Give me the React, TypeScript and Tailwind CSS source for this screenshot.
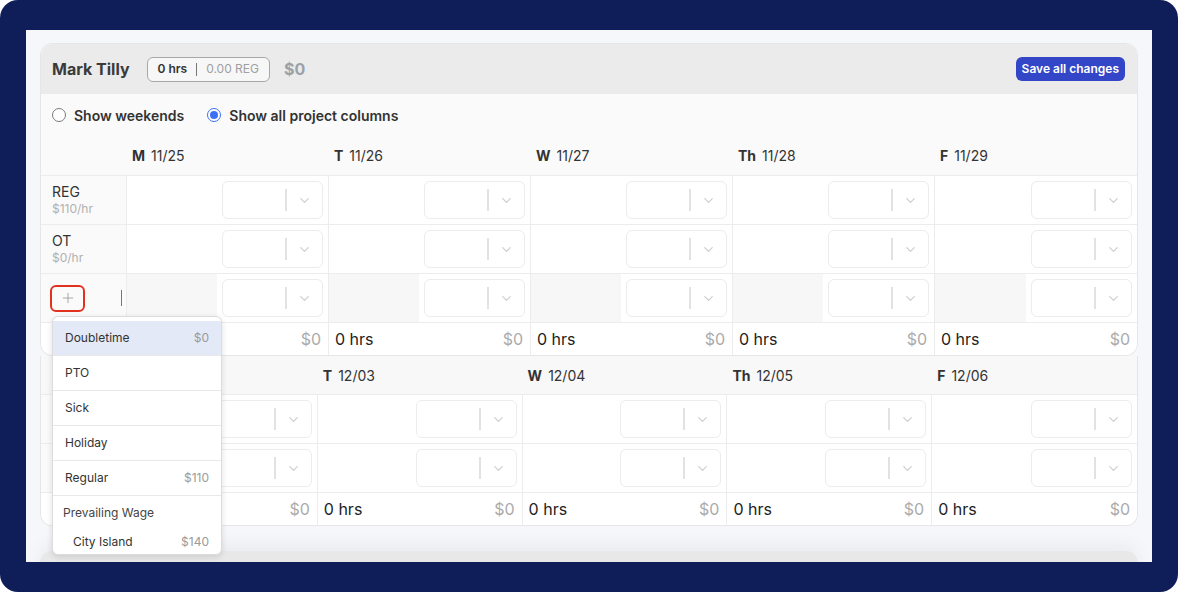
import { ChevronDown, Plus } from "lucide-react";

const week1 = [
  { d: "M", date: "11/25" },
  { d: "T", date: "11/26" },
  { d: "W", date: "11/27" },
  { d: "Th", date: "11/28" },
  { d: "F", date: "11/29" },
];

const week2 = [
  { d: "M", date: "12/02" },
  { d: "T", date: "12/03" },
  { d: "W", date: "12/04" },
  { d: "Th", date: "12/05" },
  { d: "F", date: "12/06" },
];

const menu = [
  { label: "Doubletime", rate: "$0", active: true },
  { label: "PTO" },
  { label: "Sick" },
  { label: "Holiday" },
  { label: "Regular", rate: "$110" },
];

function Select() {
  return (
    <div className="flex h-[38px] w-[101px] items-center rounded-md border border-[#ececec] bg-white">
      <div className="flex-1" />
      <div className="h-[22px] w-[2px] bg-[#e2e2e2]" />
      <div className="flex w-[35px] items-center justify-center">
        <ChevronDown size={15} strokeWidth={2} className="text-[#cfcfcf]" />
      </div>
    </div>
  );
}

function DayCell({ muted, last }: { muted?: boolean; last?: boolean }) {
  return (
    <div className={`flex h-full border-[#ececec] ${last ? "" : "border-r"}`}>
      <div className={`flex-1 ${muted ? "bg-[#f7f7f7]" : "bg-white"}`} />
      <div className="flex items-center bg-white px-[5px]">
        <Select />
      </div>
    </div>
  );
}

function Radio({ checked, label }: { checked?: boolean; label: string }) {
  return (
    <label className="flex items-center gap-[8px]">
      {checked ? (
        <span className="flex h-[14px] w-[14px] items-center justify-center rounded-full border border-[#3c6ff5] bg-white">
          <span className="h-[8px] w-[8px] rounded-full bg-[#3c6ff5]" />
        </span>
      ) : (
        <span className="h-[14px] w-[14px] rounded-full border border-[#7a7a7a] bg-white" />
      )}
      <span className="text-[14px] font-semibold text-[#333]">{label}</span>
    </label>
  );
}

function TotalsRow({ rounded }: { rounded?: boolean }) {
  return (
    <>
      <div className={`h-[32px] border-r border-[#ececec] bg-white ${rounded ? "rounded-bl-xl" : ""}`} />
      {[0, 1, 2, 3, 4].map((i) => (
        <div
          key={i}
          className={`flex h-[32px] items-center justify-between bg-white pl-[6px] pr-[7px] text-[16px] ${i < 4 ? "border-r border-[#ececec]" : rounded ? "rounded-br-xl" : ""}`}
        >
          <span className="text-[#222]">0 hrs</span>
          <span className="text-[#ababab]">$0</span>
        </div>
      ))}
    </>
  );
}

function DropdownMenu() {
  return (
    <div className="absolute left-[11px] top-[42px] z-10 w-[170px] overflow-hidden rounded-md border border-[#dcdcdc] bg-white pt-1 shadow-[0_2px_6px_rgba(0,0,0,0.12)]">
      {menu.map((m) => (
        <div
          key={m.label}
          className={`flex h-[35px] items-center justify-between border-b border-[#e8e8e8] px-3 text-[12px] ${m.active ? "bg-[#e4e9f8]" : ""}`}
        >
          <span className="text-[#333]">{m.label}</span>
          {m.rate && <span className="text-[#9a9a9a]">{m.rate}</span>}
        </div>
      ))}
      <div className="flex h-[34px] items-center px-[10px] text-[12px] text-[#444]">Prevailing Wage</div>
      <div className="flex h-[24px] items-center justify-between pl-[20px] pr-3 text-[12px]">
        <span className="text-[#333]">City Island</span>
        <span className="text-[#9a9a9a]">$140</span>
      </div>
    </div>
  );
}

export default function App() {
  return (
    <div className="h-[592px] w-[1178px] bg-white" style={{ fontFamily: "Inter, 'Noto Sans', sans-serif" }}>
      <div className="flex h-full w-full items-start rounded-[18px] bg-[#0f1d59] pl-[26px] pt-[30px]">
        <div className="h-[532px] w-[1126px] overflow-hidden bg-[#f6f7fb] px-[14px] pt-[13px]">
          {/* Week 1 card */}
          <div className="rounded-xl border border-[#e6e6e6] bg-[#fafafa]">
            <div className="flex h-[50px] items-center rounded-t-xl bg-[#ebebeb] pl-[11px] pr-3">
              <span className="text-[16px] font-bold text-[#3a3a3a]">Mark Tilly</span>
              <div className="ml-[17px] flex h-[25px] items-center rounded-md border border-[#a8a8a8] bg-[#f7f7f7] px-[10px] text-[12px]">
                <span className="font-semibold text-[#333]">0 hrs</span>
                <span className="mx-[9px] h-[13px] w-px bg-[#777]" />
                <span className="text-[#a0a0a0]">0.00 REG</span>
              </div>
              <span className="ml-[14px] text-[16px] font-bold text-[#9ca1a8]">$0</span>
              <button className="ml-auto h-[24px] rounded-md bg-[#3346c8] px-[6px] text-[12px] font-semibold text-white">
                Save all changes
              </button>
            </div>

            <div className="flex h-[42px] items-center gap-[23px] pl-[11px]">
              <Radio label="Show weekends" />
              <Radio checked label="Show all project columns" />
            </div>

            <div className="grid grid-cols-[86px_repeat(5,1fr)]">
              <div className="h-[40px] border-b border-[#ececec]" />
              {week1.map((w) => (
                <div key={w.date} className="flex h-[40px] items-center gap-[6px] border-b border-[#ececec] pl-[5px] text-[14px] text-[#333]">
                  <span className="font-bold">{w.d}</span>
                  <span>{w.date}</span>
                </div>
              ))}

              {[
                { name: "REG", rate: "$110/hr" },
                { name: "OT", rate: "$0/hr" },
              ].map((r) => (
                <div key={r.name} className="contents">
                  <div className="flex h-[49px] flex-col justify-center border-b border-r border-[#ececec] pl-[11px]">
                    <span className="text-[14px] leading-[18px] text-[#333]">{r.name}</span>
                    <span className="text-[12px] leading-[16px] text-[#b0b0b0]">{r.rate}</span>
                  </div>
                  {[0, 1, 2, 3, 4].map((i) => (
                    <div key={i} className="h-[49px] border-b border-[#ececec]">
                      <DayCell last={i === 4} />
                    </div>
                  ))}
                </div>
              ))}

              <div className="relative flex h-[49px] items-center border-b border-r border-[#ececec] pl-[9px]">
                <div className="flex h-[27px] w-[35px] items-center justify-center rounded-md border-2 border-[#e0321f]">
                  <Plus size={16} strokeWidth={1.25} className="text-[#999]" />
                </div>
                <span className="ml-[36px] h-[16px] w-px bg-[#777]" />
                <DropdownMenu />
              </div>
              {[0, 1, 2, 3, 4].map((i) => (
                <div key={i} className="h-[49px] border-b border-[#ececec]">
                  <DayCell muted last={i === 4} />
                </div>
              ))}

              <TotalsRow rounded />
            </div>
          </div>

          {/* Week 2 card */}
          <div className="overflow-hidden rounded-b-xl border border-t-0 border-[#e6e6e6] bg-[#f8f8f8]">
            <div className="grid grid-cols-[72px_repeat(5,1fr)]">
              <div className="h-[39px] border-b border-[#ececec]" />
              {week2.map((w) => (
                <div key={w.date} className="flex h-[39px] items-center gap-[6px] border-b border-[#ececec] pl-[5px] text-[14px] text-[#333]">
                  <span className="font-bold">{w.d}</span>
                  <span>{w.date}</span>
                </div>
              ))}
              {[0, 1].map((r) => (
                <div key={r} className="contents">
                  <div className="h-[49px] border-b border-r border-[#ececec] bg-[#fafafa]" />
                  {[0, 1, 2, 3, 4].map((i) => (
                    <div key={i} className="h-[49px] border-b border-[#ececec]">
                      <DayCell last={i === 4} />
                    </div>
                  ))}
                </div>
              ))}
              <TotalsRow />
            </div>
          </div>

          {/* Next employee card (cut off) */}
          <div className="mt-[25px] h-[40px] rounded-t-xl bg-[#e8e8e8] shadow-[0_-6px_18px_rgba(0,0,0,0.05)]" />
        </div>
      </div>
    </div>
  );
}
